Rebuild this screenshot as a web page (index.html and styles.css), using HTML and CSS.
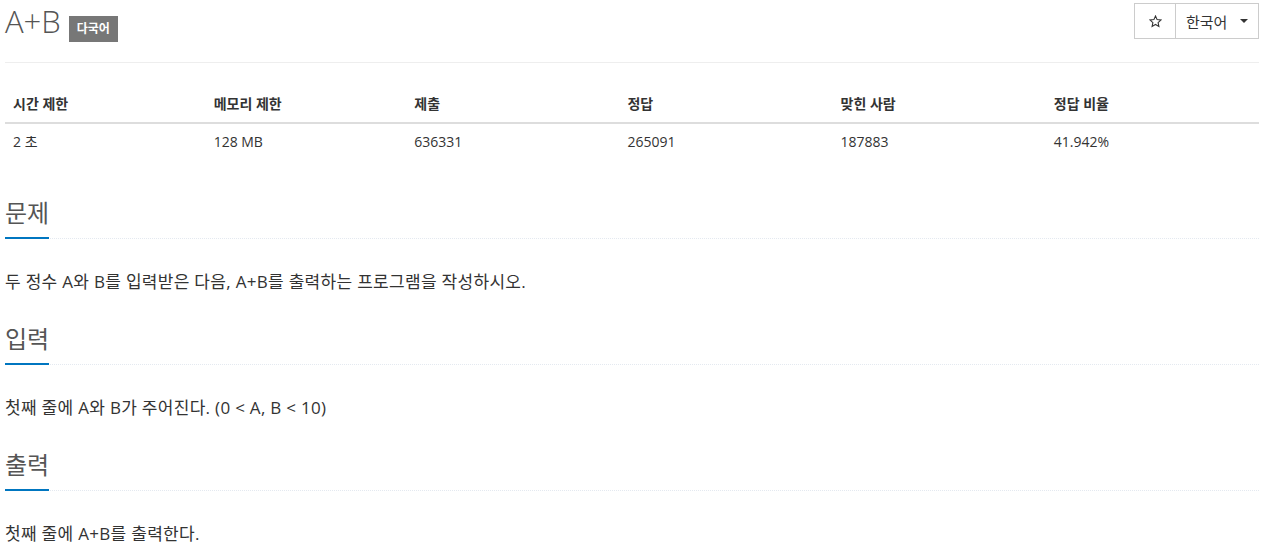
FILE: index.html
```html
<!DOCTYPE html>
<html lang="ko">
<head>
<meta charset="utf-8">
<title>A+B</title>
<link rel="stylesheet" href="styles.css">
</head>
<body>
<div class="page">
  <div class="page-header">
    <h1 class="title">
      <span class="title-text">A+B</span>
      <span class="label">다국어</span>
    </h1>
    <div class="btn-group">
      <button class="btn btn-star" type="button" aria-label="star">
        <svg width="13" height="13" viewBox="0 0 13 13"><path d="M6.5 1 L8.1 4.6 L12 5 L9.1 7.6 L9.9 11.5 L6.5 9.5 L3.1 11.5 L3.9 7.6 L1 5 L4.9 4.6 Z" fill="none" stroke="#333" stroke-width="1.1" stroke-linejoin="miter"/></svg>
      </button>
      <button class="btn btn-lang" type="button">한국어<span class="caret"></span></button>
    </div>
  </div>
  <hr class="rule">
  <table class="info">
    <thead>
      <tr>
        <th class="w16">시간 제한</th>
        <th class="w16">메모리 제한</th>
        <th class="w17">제출</th>
        <th class="w17">정답</th>
        <th class="w17">맞힌 사람</th>
        <th class="w17">정답 비율</th>
      </tr>
    </thead>
    <tbody>
      <tr>
        <td>2 초</td>
        <td>128 MB</td>
        <td>636331</td>
        <td>265091</td>
        <td>187883</td>
        <td>41.942%</td>
      </tr>
    </tbody>
  </table>

  <section class="section first">
    <div class="headline"><h2>문제</h2></div>
    <p class="text">두 정수 A와 B를 입력받은 다음, A+B를 출력하는 프로그램을 작성하시오.</p>
  </section>
  <section class="section">
    <div class="headline"><h2>입력</h2></div>
    <p class="text">첫째 줄에 A와 B가 주어진다. (0 &lt; A, B &lt; 10)</p>
  </section>
  <section class="section">
    <div class="headline"><h2>출력</h2></div>
    <p class="text">첫째 줄에 A+B를 출력한다.</p>
  </section>
</div>
</body>
</html>
```

FILE: styles.css
```css
* { box-sizing: border-box; }
html, body { margin: 0; padding: 0; background: #fff; }
body {
  font-family: "Open Sans", "Noto Sans CJK KR", sans-serif;
  font-size: 14px;
  color: #333;
}
.page {
  width: 1254px;
  margin-left: 5px;
}
.page-header {
  display: flex;
  justify-content: space-between;
  align-items: flex-start;
  height: 42px;
}
.title {
  display: flex;
  align-items: flex-start;
  margin: 3px 0 0 0;
  font-weight: 300;
  font-size: 31px;
  line-height: 36px;
  color: #555;
}
.title-text { display: block; }
.label {
  display: block;
  margin: 13px 0 0 8px;
  padding: 7px 8px 7px;
  background: #777;
  color: #fff;
  font-size: 12px;
  font-weight: 700;
  line-height: 12px;
}
.btn-group {
  display: flex;
  margin-top: 3px;
}
.btn {
  display: flex;
  align-items: center;
  height: 36px;
  background: #fff;
  border: 1px solid #ccc;
  color: #333;
  font-family: "Open Sans", "Noto Sans CJK KR", sans-serif;
  font-size: 14px;
  padding: 0;
  margin: 0;
}
.btn-star {
  width: 42px;
  justify-content: center;
}
.btn-lang {
  width: 84px;
  margin-left: -1px;
  padding: 0 10px 0 10px;
  justify-content: space-between;
  font-size: 15px;
}
.caret {
  display: block;
  width: 0;
  height: 0;
  border-top: 4px solid #333;
  border-left: 4px solid transparent;
  border-right: 4px solid transparent;
}
.rule {
  margin: 20px 0 0 0;
  border: 0;
  border-top: 1px solid #eee;
  height: 0;
}
.info {
  width: 100%;
  margin-top: 23px;
  border-collapse: collapse;
  border-spacing: 0;
}
.info th, .info td {
  text-align: left;
  padding: 8px 8px;
  line-height: 20px;
  font-size: 14px;
  vertical-align: top;
}
.info th {
  font-weight: 700;
  border-bottom: 2px solid #ddd;
}
.w16 { width: 16%; }
.w17 { width: 17%; }
.section { margin-top: 28px; }
.section.first { margin-top: 39px; }
.headline {
  display: flex;
  border-bottom: 1px dotted #e4e9f0;
}
.headline h2 {
  margin: 0 0 -1px 0;
  padding: 0 0 10px 0;
  font-size: 24px;
  line-height: 28px;
  font-weight: 400;
  color: #555;
  border-bottom: 2px solid #0076c0;
}
.text {
  margin: 28px 0 0 0;
  font-size: 17px;
  line-height: 30px;
  letter-spacing: 0.3px;
  color: #333;
}
```
